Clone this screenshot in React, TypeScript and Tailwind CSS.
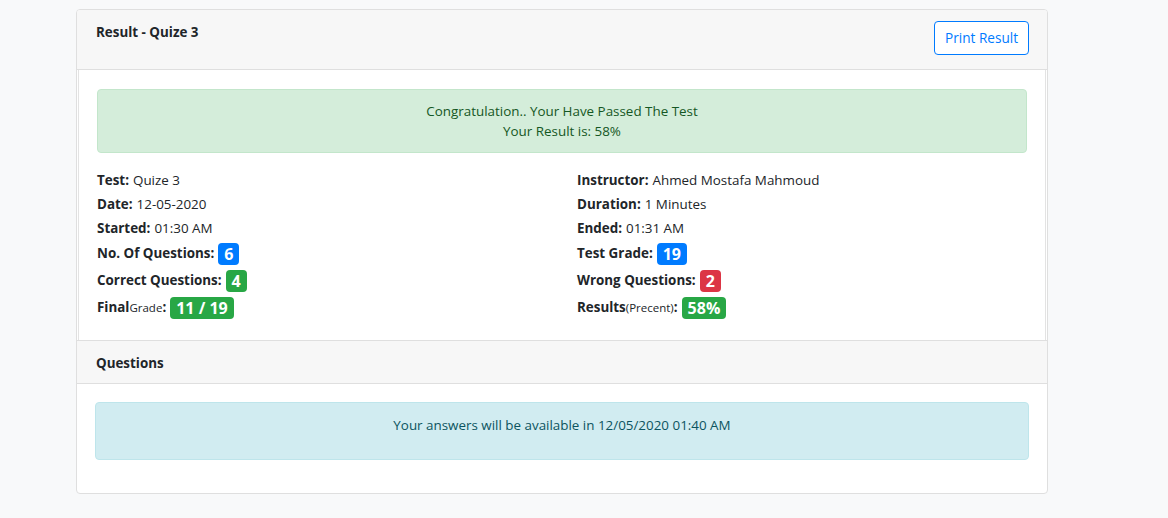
const font = { fontFamily: '"Open Sans", "Noto Sans", Arial, sans-serif' };

function Badge({ color, children }: { color: string; children: React.ReactNode }) {
  return (
    <span
      className={`inline-flex items-center justify-center h-[22px] px-[6px] rounded-[4px] text-white text-[16px] font-bold leading-none ${color}`}
    >
      {children}
    </span>
  );
}

function Row({ label, small, value, badge }: { label: string; small?: string; value?: string; badge?: React.ReactNode }) {
  return (
    <div className={`flex items-center gap-[4px] ${badge ? "h-[27px]" : "h-[24px]"}`}>
      <span>
        <b className="font-bold">{label}</b>
        {small && <span className="text-[11.5px]">{small}</span>}
        <b className="font-bold">:</b>
      </span>
      {value && <span>{value}</span>}
      {badge}
    </div>
  );
}

export default function App() {
  return (
    <div className="min-h-[518px] w-full bg-[#f8f9fa] pt-[9px] pl-[76px] text-[13.4px] text-[#212529]" style={font}>
      <div className="w-[972px] rounded-[4px] border border-[#dfdfdf] bg-white overflow-hidden">
        <div className="h-[60px] flex justify-between items-start pl-[19px] pr-[18px] pt-[11px] bg-[#f7f7f7] border-b border-[#dfdfdf]">
          <h2 className="mt-[1px] font-bold text-[13.4px] leading-[21px] text-[#212529]">Result - Quize 3</h2>
          <button className="h-[34px] w-[95px] rounded-[4px] border border-[#007bff] text-[#007bff] text-[13.6px] leading-none bg-white">
            Print Result
          </button>
        </div>

        <div className="mx-px border-x border-[#e3e3e3] px-[18px] pt-[19px] pb-[19px]">
          <div className="rounded-[4px] border border-[#c3e6cb] bg-[#d4edda] text-[#155724] text-center py-[11px] leading-[20px]">
            <p>Congratulation.. Your Have Passed The Test</p>
            <p>Your Result is: 58%</p>
          </div>

          <div className="grid grid-cols-2 gap-x-[30px] mt-[15px] leading-[21px]">
            <div>
              <Row label="Test" value="Quize 3" />
              <Row label="Date" value="12-05-2020" />
              <Row label="Started" value="01:30 AM" />
              <Row label="No. Of Questions" badge={<Badge color="bg-[#007bff]">6</Badge>} />
              <Row label="Correct Questions" badge={<Badge color="bg-[#28a745]">4</Badge>} />
              <Row label="Final" small="Grade" badge={<Badge color="bg-[#28a745]">11 / 19</Badge>} />
            </div>
            <div>
              <Row label="Instructor" value="Ahmed Mostafa Mahmoud" />
              <Row label="Duration" value="1 Minutes" />
              <Row label="Ended" value="01:31 AM" />
              <Row label="Test Grade" badge={<Badge color="bg-[#007bff]">19</Badge>} />
              <Row label="Wrong Questions" badge={<Badge color="bg-[#dc3545]">2</Badge>} />
              <Row label="Results" small="(Precent)" badge={<Badge color="bg-[#28a745]">58%</Badge>} />
            </div>
          </div>
        </div>

        <div className="h-[44px] flex items-center pt-[3px] px-[19px] bg-[#f7f7f7] border-y border-[#dfdfdf]">
          <h3 className="font-bold text-[13.4px]">Questions</h3>
        </div>

        <div className="px-[18px] pt-[18px] pb-[33px]">
          <div className="rounded-[4px] border border-[#bee5eb] bg-[#d1ecf1] text-[#0c5460] text-center pt-[12px] pb-[23px] leading-[21px]">
            Your answers will be available in 12/05/2020 01:40 AM
          </div>
        </div>
      </div>
    </div>
  );
}
